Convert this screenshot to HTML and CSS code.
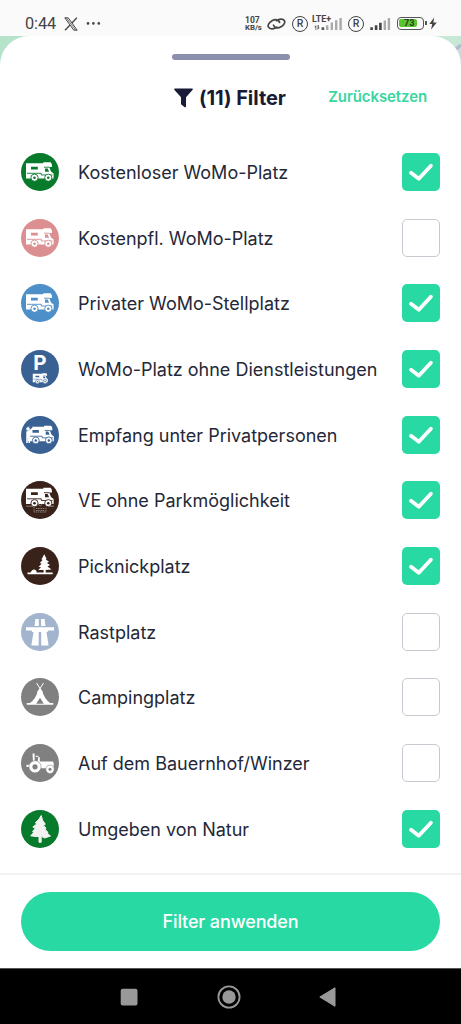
FILE: index.html
```html
<!DOCTYPE html>
<html lang="de">
<head>
<meta charset="utf-8">
<title>Filter</title>
<link rel="stylesheet" href="styles.css">
</head>
<body>
<svg class="defs" width="0" height="0" aria-hidden="true">
  <symbol id="camper" viewBox="0 0 38 38">
    <path fill="#fff" d="M5 10.3H22.3V9.3H29.6Q31.4 10.8 31 14H28.2L30 18.6L32.6 20.6V25.6H5Z"/>
    <path fill="none" stroke="currentColor" stroke-width=".9" d="M6 20.3H20.3V22H31.5M23 14.2H28.3"/>
    <path fill="currentColor" d="M10 13.8h6.8v2.8H10zM24 15.4h2.7l1.4 3.3H24z"/>
    <g fill="#fff" stroke="currentColor" stroke-width=".9"><circle cx="13.5" cy="24.7" r="3.6"/><circle cx="27.3" cy="24.7" r="3.6"/></g>
    <g fill="currentColor"><circle cx="13.5" cy="24.7" r="1.3"/><circle cx="27.3" cy="24.7" r="1.3"/></g>
  </symbol>
  <symbol id="check" viewBox="0 0 38 38">
    <path d="M9 19.8L16.8 25.8L28.9 12.7" fill="none" stroke="#fff" stroke-width="3.8" stroke-linecap="round" stroke-linejoin="round"/>
  </symbol>
</svg>
<div class="screen">
  <header class="status">
    <div class="status-left">
      <span class="clock">0:44</span>
      <svg class="x-logo" width="14" height="14" viewBox="0 0 14 14" fill="none" stroke="#444"><path stroke-width="1" d="M.8 .8H4.2L13.2 13.2H9.8Z"/><path stroke-width="1.3" d="M12.8 .8L7.8 6.3M6 8L1 13.3"/><path stroke-width=".7" d="M2.5 1L11.5 13"/></svg>
      <svg width="15" height="14" viewBox="0 0 15 14" fill="#444"><circle cx="2" cy="6.4" r="1.3"/><circle cx="7.4" cy="6.4" r="1.3"/><circle cx="12.8" cy="6.4" r="1.3"/></svg>
    </div>
    <div class="status-right">
      <span class="speed"><span>107</span><span class="unit">KB/s</span></span>
      <svg class="link" width="19" height="14" viewBox="0 0 19 14" fill="none" stroke="#444" stroke-width="1.7" stroke-linecap="round"><path d="M12.6 5.3C11.5 2.8 8.5 1.9 5.4 3.6C1.9 5.5.4 8.2 1.5 10.2C2.9 12.7 7 12.2 9.8 10.2M6.5 8.2C7.6 10.9 10.5 11.8 13.6 10.1C17 8.2 18.5 5.5 17.3 3.5C16 1.4 12.2 1.8 9.4 3.7"/></svg>
      <span class="reg reg-one">R</span>
      <span class="mobile"><svg width="31" height="14" viewBox="0 0 31 14"><path fill="#555" d="M3.5 13V10.3H2.2L4.3 8V13zM5.6 8v5l2.1-2.5H6.7V8zM9.6 10.3h2.6V13H9.6z"/><path fill="#aaa" d="M14 8.3h2.4V13H14zM18.6 5.5H21V13h-2.4zM23 3.2h2.4V13H23zM27.4 1h2.4v12h-2.4z"/></svg><span class="lte">LTE+</span></span>
      <span class="reg reg-two">R</span>
      <svg class="signal" width="21" height="14" viewBox="0 0 21 14"><path fill="#444" d="M.3 10.3h2.6V13H.3zM4.8 8.3h2.6V13H4.8zM9.1 5.8h2.6V13H9.1z"/><path fill="#aaa" d="M13.6 3.4h2.4V13h-2.4zM17.7 1h2.4v12h-2.4z"/></svg>
      <span class="battery"><span class="level">73</span></span>
      <svg class="bolt" width="8" height="13" viewBox="0 0 8 13"><path fill="#444" d="M5.2 .4L.3 7H3.2L2.1 12.6L7.8 5.4H4.4Z"/></svg>
    </div>
  </header>
  <div class="map">
    <svg class="map-corner" width="40" height="40" viewBox="0 0 40 40"><path fill="#d5d8da" d="M22 0H40V40H22Z"/><path fill="#c6e8d5" d="M8 0H40V7L28 14Z"/><path d="M30 17L40 9" stroke="#aebdce" stroke-width="3"/></svg>
    <main class="sheet">
      <div class="handle"></div>
      <div class="heading">
        <h1><svg width="19" height="20" viewBox="0 0 19 20"><path fill="#171b36" d="M.8 .5H18.2Q19.2 .8 18.5 1.9L12 9.3V18.4Q11.6 19.7 10.4 19L7 16.2V9.3L.5 1.9Q-.2 .8 .8 .5Z"/></svg><span>(11) Filter</span></h1>
        <a class="reset">Zurücksetzen</a>
      </div>
      <ul class="filters">
        <li><svg class="icon free"><use href="#camper"/></svg><span class="label">Kostenloser WoMo-Platz</span><span class="box on"><svg><use href="#check"/></svg></span></li>
        <li><svg class="icon paid"><use href="#camper"/></svg><span class="label">Kostenpfl. WoMo-Platz</span><span class="box"></span></li>
        <li><svg class="icon private"><use href="#camper"/></svg><span class="label">Privater WoMo-Stellplatz</span><span class="box on"><svg><use href="#check"/></svg></span></li>
        <li><span class="icon blue parking"><b>P</b><svg width="21" height="21"><use href="#camper"/></svg></span><span class="label">WoMo-Platz ohne Dienstleistungen</span><span class="box on"><svg><use href="#check"/></svg></span></li>
        <li><svg class="icon host" viewBox="0 0 38 38"><use href="#camper" x="2" y="0" width="36" height="38"/><path d="M5 15L11 10.5" stroke="#3a6194" stroke-width="2.2"/><g fill="#fff"><circle cx="7" cy="13" r="1.8"/><path d="M5.3 15.2H9L11.2 18L10.3 19L9 17.8V27H7.5V22H6.8V27H5.2Z"/></g></svg><span class="label">Empfang unter Privatpersonen</span><span class="box on"><svg><use href="#check"/></svg></span></li>
        <li><svg class="icon brown" viewBox="0 0 38 38"><use href="#camper" y="-2.5" width="38" height="38"/><g fill="none" stroke="#a99a92"><path stroke-width=".8" d="M5 25.2H12M27.5 25.2H33M17 23L19.3 25L21.5 23"/><path stroke-width=".8" stroke-dasharray="1.5 .7" d="M13 26V31H25V26M15 27.5H24M15 29.5H24"/></g></svg><span class="label">VE ohne Parkmöglichkeit</span><span class="box on"><svg><use href="#check"/></svg></span></li>
        <li><svg class="icon brown" viewBox="0 0 38 38" fill="#fff"><path d="M6.5 25.5H9.5Q12 20.5 15.5 24V25.5H22.6V23H17.3L20 20.2L17.6 19.7L20.7 16.8L18.8 16L21.5 13L20.5 12.2L23.3 7.2L25.5 11.7L24.9 12.7L28 14.5L26 16L29 18L26.5 19.5L30.5 22.4L24.7 23V25.5H31.7V27.3H6.5Z"/></svg><span class="label">Picknickplatz</span><span class="box on"><svg><use href="#check"/></svg></span></li>
        <li><svg class="icon rest" viewBox="0 0 38 38" fill="#fff"><path d="M14.4 6H17.8V13H13.5ZM20.1 6H23.6L24.5 13H20.1ZM5 14.2H33V17.4H27.3L26.5 19H25.5L27.6 32.5H20.2V19H17.7V32.5H10.3L12.5 19H11.3L10.5 17.4H5Z"/></svg><span class="label">Rastplatz</span><span class="box"></span></li>
        <li><svg class="icon gray" viewBox="0 0 38 38"><path fill="none" stroke="#fff" stroke-width="1" d="M15.6 5L21.5 14.5M22.5 5L16.5 14.5"/><path fill="#fff" d="M19 10.5L21 12.8Q23.8 21.5 29 25H32.3V26.7H5.7V25H9Q14.5 21.5 17 12.8Z"/><path fill="#808080" d="M19 19.7L22.8 25.7H15.2Z"/></svg><span class="label">Campingplatz</span><span class="box"></span></li>
        <li><svg class="icon gray" viewBox="0 0 38 38"><path fill="#fff" d="M11.5 9.5H13.6V17L17 16.8V13.2H18.8V17.5H31.8Q33 18 32.6 22V24.3H11.5L9 23L5.5 23V20.8H9L12 18Z"/><path d="M14.5 12.3H17.5" stroke="#fff" stroke-width="1"/><g fill="#fff" stroke="#808080" stroke-width=".6"><circle cx="14" cy="22.8" r="6.1"/><circle cx="29" cy="25.3" r="4.2"/></g><g fill="#808080"><circle cx="14" cy="22.8" r="2.6"/><circle cx="29" cy="25.3" r="1.5"/></g></svg><span class="label">Auf dem Bauernhof/Winzer</span><span class="box"></span></li>
        <li><svg class="icon free" viewBox="0 0 38 38" fill="#f2f2f2" stroke="#f2f2f2" stroke-width="1" stroke-linejoin="round"><path d="M20.2 5.5L18 9.2L14.3 12.8L16 13.8L11.8 17L14.4 18L11.5 21.8H13.4L9.7 25.8L15 26.6L18 26.3V32.3H20.2V26.3L23.7 28L29.5 26L26 23L27 22.4L23.8 19L25 18.3L22.4 15L24.3 14.2L21.6 10.3Z"/></svg><span class="label">Umgeben von Natur</span><span class="box on"><svg><use href="#check"/></svg></span></li>
      </ul>
      <footer class="action"><button>Filter anwenden</button></footer>
    </main>
  </div>
  <nav class="navbar">
    <svg width="18" height="18" viewBox="0 0 18 18"><rect x=".7" y=".7" width="16.8" height="16.8" rx="2" fill="#999"/></svg>
    <svg width="24" height="24" viewBox="0 0 24 24"><circle cx="12" cy="12" r="10.6" fill="none" stroke="#999" stroke-width="1.8"/><circle cx="12" cy="12" r="6.7" fill="#999"/></svg>
    <svg width="17" height="20" viewBox="0 0 17 20"><path d="M.8 10L16 .8V19.3Z" fill="#999" stroke="#999" stroke-linejoin="round"/></svg>
  </nav>
</div>
</body>
</html>
```
FILE: styles.css
```css
* { box-sizing: border-box; }
body { margin: 0; font-family: Inter, "Liberation Sans", sans-serif; color: #242838; }
svg { display: block; flex: none; }
.defs { position: absolute; }
.screen { width: 461px; height: 1024px; display: flex; flex-direction: column; overflow: hidden; }

.status { height: 36px; flex: none; background: #fafafa; display: flex; justify-content: space-between; padding: 0 24px 0 25px; color: #444; font-family: Roboto, sans-serif; }
.status-left, .status-right { display: flex; align-items: center; padding-top: 11px; }
.clock { font-size: 16.3px; letter-spacing: -.1px; line-height: 20px; }
.x-logo { margin: 0 8px 0 8px; }
.speed { display: flex; flex-direction: column; align-items: flex-start; font-size: 8.5px; line-height: 8px; font-weight: 700; width: 18px; }
.unit { font-size: 7.8px; }
.link { margin-left: 4px; }
.reg { width: 16px; height: 16px; border: 1.5px solid #444; border-radius: 50%; font-size: 10.5px; line-height: 13px; text-align: center; font-weight: 500; }
.reg-one { margin-left: 6px; }
.mobile { position: relative; display: flex; width: 31px; margin-left: 4px; }
.lte { position: absolute; left: 0; top: -3px; font-size: 8.8px; line-height: 10px; font-weight: 700; }
.reg-two { margin-left: 5px; }
.signal { margin-left: 6px; }
.battery { position: relative; width: 27px; height: 13px; margin-left: 6px; border: 1.5px solid #555; border-radius: 4px; padding: 1px; }
.battery::after { content: ""; position: absolute; right: -4px; top: 3px; width: 2px; height: 4px; background: #555; }
.level { display: block; width: 18px; height: 8px; padding-left: 5px; border-radius: 2px; background: #5cc331; color: #26421b; font-size: 9px; line-height: 8px; font-weight: 700; }
.bolt { margin-left: 5px; }

.map { position: relative; height: 932px; flex: none; background: linear-gradient(90deg, #b5e3ca, #cbe9d8); }
.map-corner { position: absolute; right: 0; top: 0; }
.sheet { position: relative; height: 932px; background: #fff; border-radius: 29px 29px 0 0; display: flex; flex-direction: column; }
.handle { width: 118px; height: 6px; margin: 18px auto 0; border-radius: 3px; background: #8c8fab; flex: none; }
.heading { height: 79px; flex: none; padding: 0 34px 0 174px; display: flex; justify-content: space-between; align-items: flex-start; }
h1 { margin: 25px 0 0; display: flex; align-items: center; gap: 6px; color: #171b36; font-size: 20px; line-height: 24px; font-weight: 700; letter-spacing: -.05px; white-space: nowrap; }
h1 span { padding-top: 1px; }
.reset { margin-top: 26px; color: #3bd6a0; font-size: 15px; line-height: 22px; font-weight: 600; letter-spacing: -.1px; }

.filters { list-style: none; margin: 0; padding: 0 21px; height: 733.6px; flex: none; }
.filters li { height: 65.7px; display: flex; align-items: center; }
.icon { width: 38px; height: 38px; border-radius: 50%; flex: none; }
.free { background: #087a2c; color: #087a2c; }
.paid { background: #dc8f91; color: #dc8f91; }
.private { background: #4d8fc9; color: #4d8fc9; }
.blue, .host { background: #3a6194; color: #3a6194; }
.brown { background: #38221a; color: #38221a; }
.rest { background: #a2b4ce; }
.gray { background: #808080; }
.parking { display: flex; flex-direction: column; align-items: center; }
.parking b { color: #fff; font: 700 20.5px/24px Inter, sans-serif; margin-top: 1.5px; }
.parking svg { margin-top: -7.5px; }
.label { flex: 1; margin-left: 19px; padding-top: 2px; font-size: 18px; line-height: 24px; white-space: nowrap; }
.box { width: 38px; height: 38px; flex: none; border: 1px solid #c6cad0; border-radius: 5px; background: #fff; }
.box.on { border: 0; background: #29d9a3; }
.box svg { width: 38px; height: 38px; }

.action { flex: 1; border-top: 2px solid #f2f2f3; padding: 17px 21px 0; }
button { display: block; width: 100%; height: 59px; border: 0; border-radius: 30px; background: #29d9a3; color: #fff; font: 500 18px/24px Inter, sans-serif; letter-spacing: -.12px; padding: 2px 0 0; }

.navbar { height: 56px; flex: none; background: #000; border-top: 1px solid #555; display: flex; align-items: center; justify-content: space-between; padding: 0 125px 0 120px; }
```
